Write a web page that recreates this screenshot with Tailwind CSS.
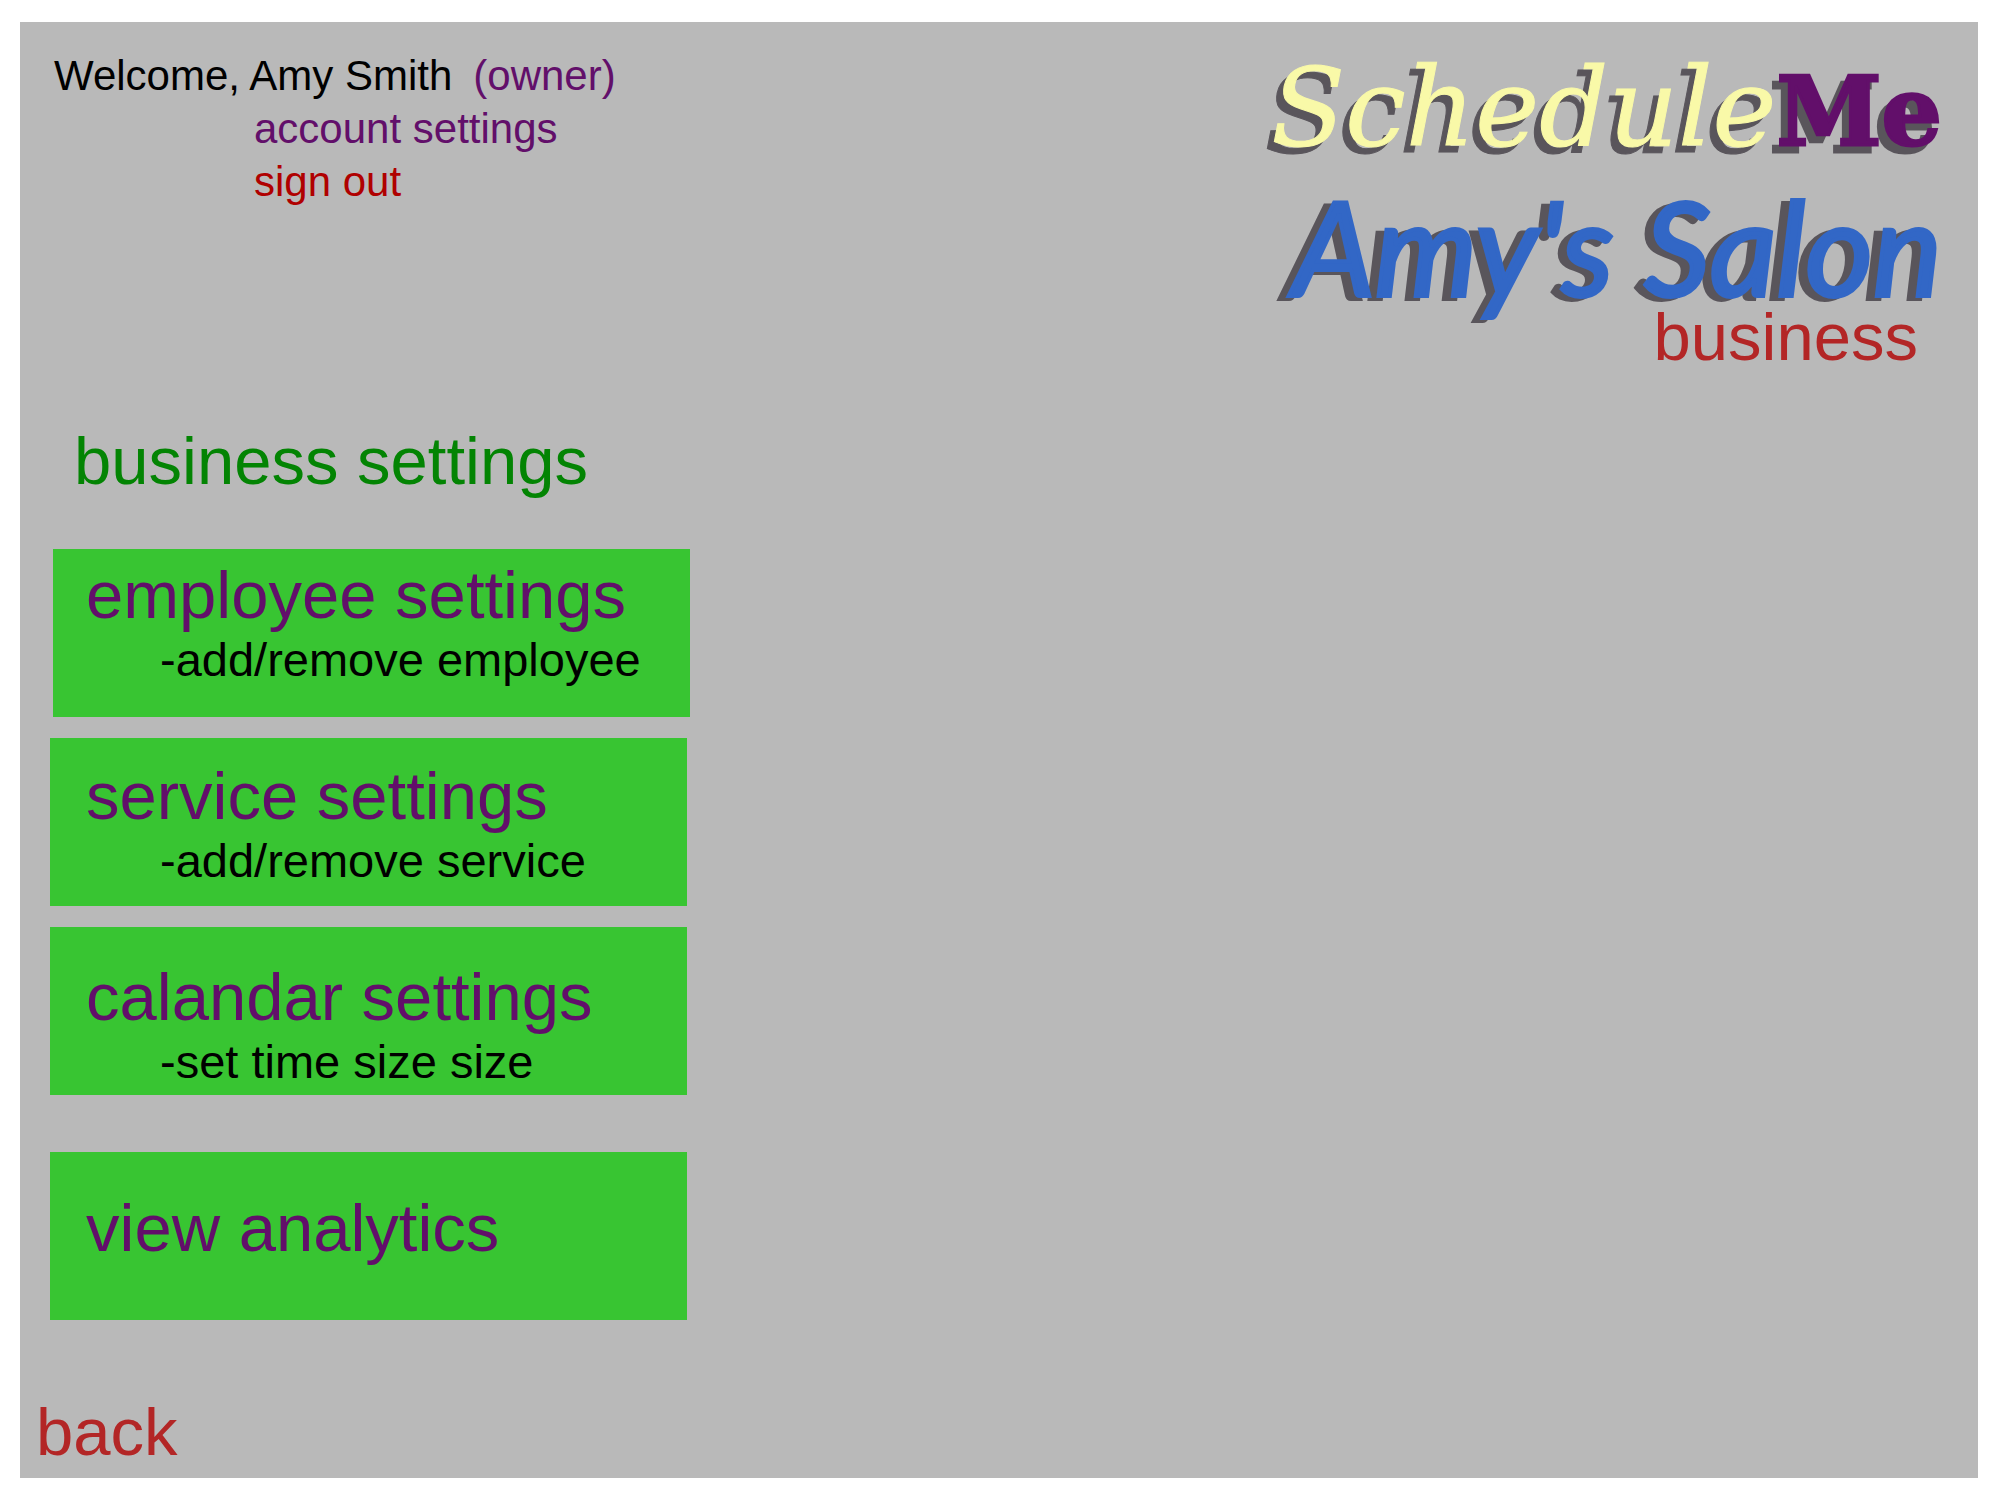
<!DOCTYPE html>
<html lang="en">
<head>
<meta charset="utf-8">
<meta name="viewport" content="width=device-width, initial-scale=1">
<title>ScheduleMe - business settings</title>
<script src="https://cdn.jsdelivr.net/npm/@tailwindcss/browser@4"></script>
</head>
<body class="bg-white pt-[22px] pb-[22px] pl-[20px] pr-[22px] font-['Liberation_Sans',Arial,sans-serif] text-black">
<div class="flex min-h-[calc(100vh-44px)] flex-col bg-[#b9b9b9] pb-2">
  <header class="flex items-start justify-between pr-9">
    <div class="flex flex-col items-start pt-[27px] pl-[34px] text-[42px] leading-[53px]">
      <p class="flex gap-[21px]"><span>Welcome, Amy Smith</span><span class="text-[#620f6a]">(owner)</span></p>
      <nav class="flex flex-col items-start pl-[200px]">
        <a href="#account" class="text-[#620f6a]">account settings</a>
        <a href="#signout" class="text-[#b00000]">sign out</a>
      </nav>
    </div>
    <div class="flex flex-col items-end pt-[21px]">
      <div class="flex h-[130px] items-baseline font-['DejaVu_Serif',serif] leading-[130px] drop-shadow-[-7px_7px_0_#59555b]">
        <span class="text-[108px] text-[#f9f9a8] italic [-webkit-text-stroke:1px_#f9f9a8]">Schedule</span>
        <span class="text-[95px] font-bold text-[#620f6a] [-webkit-text-stroke:3px_#620f6a]">Me</span>
      </div>
      <div class="mt-8 mb-[11px] font-[Lato,sans-serif] text-[130px] leading-[83px] text-[#3267c6] italic drop-shadow-[-9px_3px_0_#59555b] [-webkit-text-stroke:4px_#3267c6]">Amy's Salon</div>
      <div class="pr-6 text-[67px] leading-[76px] text-[#b32626]">business</div>
    </div>
  </header>
  <main class="flex flex-1 flex-col items-start">
    <h1 class="mt-12 ml-[54px] text-[67px] leading-[76px] text-[#038403]">business settings</h1>
    <a href="#employees" class="mt-[50px] ml-[33px] block h-[168px] w-full max-w-[637px] bg-[#38c532] pt-[8px] pl-[33px]">
      <h2 class="text-[67px] leading-[76px] text-[#620f6a]">employee settings</h2>
      <p class="pl-[74px] text-[47px] leading-[54px]">-add/remove employee</p>
    </a>
    <a href="#services" class="mt-[21px] ml-[30px] block h-[168px] w-full max-w-[637px] bg-[#38c532] pt-[20px] pl-[36px]">
      <h2 class="text-[67px] leading-[76px] text-[#620f6a]">service settings</h2>
      <p class="pl-[74px] text-[47px] leading-[54px]">-add/remove service</p>
    </a>
    <a href="#calendar" class="mt-[21px] ml-[30px] block h-[168px] w-full max-w-[637px] bg-[#38c532] pt-8 pl-[36px]">
      <h2 class="text-[67px] leading-[76px] text-[#620f6a]">calandar settings</h2>
      <p class="pl-[74px] text-[47px] leading-[54px]">-set time size size</p>
    </a>
    <a href="#analytics" class="mt-[57px] ml-[30px] block h-[168px] w-full max-w-[637px] bg-[#38c532] pt-[38px] pl-[36px]">
      <h2 class="text-[67px] leading-[76px] text-[#620f6a]">view analytics</h2>
    </a>
    <a href="#back" class="mt-auto ml-4 text-[67px] leading-[76px] text-[#b32626]">back</a>
  </main>
</div>
</body>
</html>
